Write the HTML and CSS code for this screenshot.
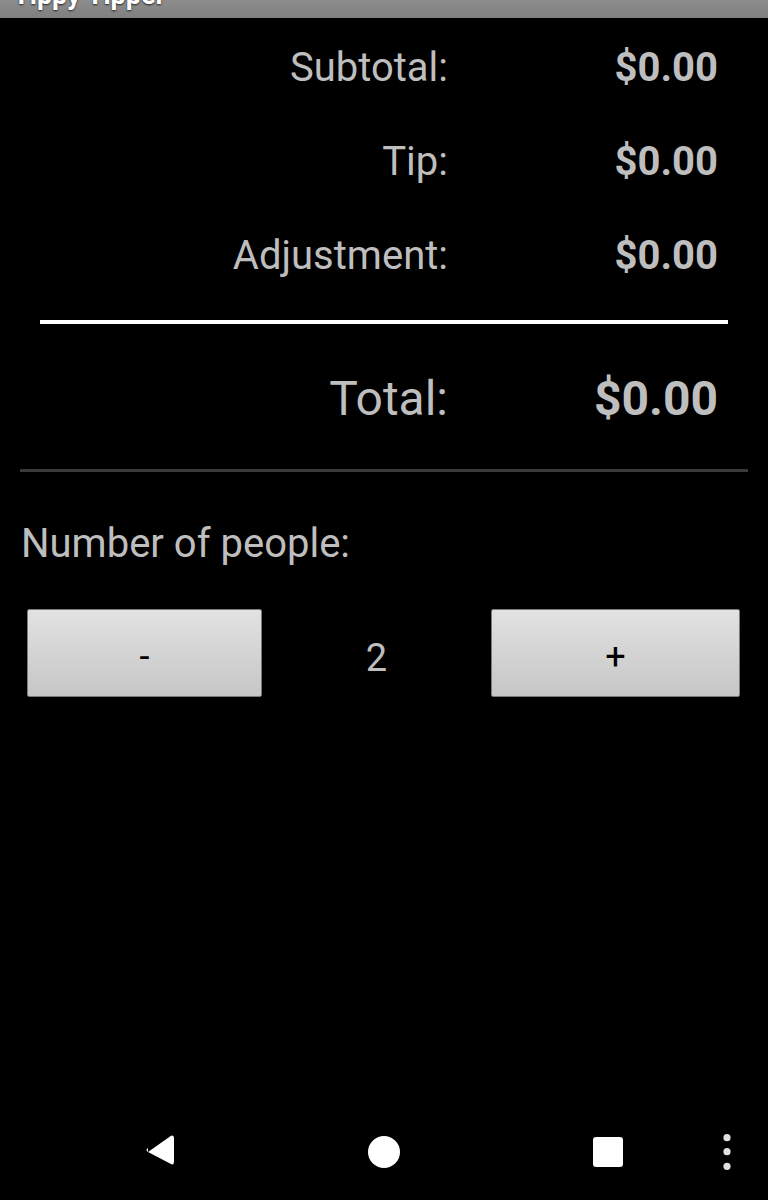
FILE: index.html
```html
<!DOCTYPE html>
<html>
<head>
<meta charset="utf-8">
<link rel="stylesheet" href="styles.css">
</head>
<body>
<div class="screen">
  <div class="titlebar"><span class="title">Tippy Tipper</span></div>
  <main class="content">
    <div class="rows">
      <div class="row"><span class="label">Subtotal:</span><span class="value">$0.00</span></div>
      <div class="row"><span class="label">Tip:</span><span class="value">$0.00</span></div>
      <div class="row"><span class="label">Adjustment:</span><span class="value">$0.00</span></div>
    </div>
    <div class="rule-white"></div>
    <div class="row total"><span class="label">Total:</span><span class="value">$0.00</span></div>
    <div class="rule-dark"></div>
    <div class="people-label">Number of people:</div>
    <div class="stepper">
      <button class="btn btn-minus">-</button>
      <span class="count">2</span>
      <button class="btn btn-plus">+</button>
    </div>
  </main>
  <nav class="navbar">
    <svg width="768" height="96" viewBox="0 0 768 96">
      <path d="M148 50 L170 34.5 Q174 32 174 36.5 L174 59.5 Q174 64 170 61.5 L148 50 Q145 48 148 46 Z" fill="#fff" transform="translate(0,-2)"/>
      <circle cx="384" cy="48" r="16" fill="#fff"/>
      <rect x="593" y="33" width="30" height="30" rx="3" fill="#fff"/>
      <circle cx="727" cy="33.7" r="3.6" fill="#e0e0e0"/>
      <circle cx="727" cy="47.7" r="3.6" fill="#e0e0e0"/>
      <circle cx="727" cy="62.3" r="3.6" fill="#e0e0e0"/>
    </svg>
  </nav>
</div>
</body>
</html>
```
FILE: styles.css
```css
html, body {
  margin: 0;
  padding: 0;
  background: #000;
}
.screen {
  width: 768px;
  height: 1200px;
  display: flex;
  flex-direction: column;
  font-family: Roboto, "Liberation Sans", sans-serif;
  color: #bebebe;
  overflow: hidden;
}
.titlebar {
  height: 18px;
  flex: none;
  background: linear-gradient(#8c8c8c, #808080);
  overflow: hidden;
}
.title {
  display: block;
  margin-top: -18px;
  margin-left: 13px;
  font-size: 27px;
  line-height: 27px;
  font-weight: bold;
  color: #fff;
  text-shadow: 0 1px 2px #222;
}
.content {
  flex: 1;
  display: flex;
  flex-direction: column;
}
.rows {
  padding-top: 3px;
}
.row {
  display: grid;
  grid-template-columns: 448px 270px;
  height: 94px;
  line-height: 94px;
  font-size: 40px;
}
.label {
  text-align: right;
}
.value {
  text-align: right;
  font-weight: bold;
}
.rule-white {
  height: 4px;
  margin: 17px 40px 0 40px;
  background: #fff;
}
.row.total {
  margin-top: 25px;
  height: 100px;
  line-height: 100px;
  font-size: 48px;
}
.rule-dark {
  height: 3px;
  margin: 20px 20px 0 20px;
  background: #3a3a3a;
}
.people-label {
  margin-top: 48px;
  padding-left: 21px;
  font-size: 40px;
  line-height: 48px;
}
.stepper {
  display: flex;
  align-items: center;
  margin-top: 41px;
  padding-left: 27px;
  height: 88px;
}
.btn {
  height: 88px;
  margin: 0;
  padding: 8px 0 0 0;
  border: 1px solid #7a7a7a;
  border-radius: 2px;
  background: linear-gradient(#e2e2e2, #c6c6c6);
  color: #000;
  font-family: Roboto, "Liberation Sans", sans-serif;
  font-size: 36px;
  line-height: 1;
  box-sizing: border-box;
}
.btn-minus {
  width: 235px;
}
.btn-plus {
  width: 249px;
}
.count {
  width: 229px;
  text-align: center;
  font-size: 38px;
  padding-top: 10px;
}
.navbar {
  flex: none;
  height: 96px;
  background: #000;
}
.navbar svg {
  display: block;
}
```
